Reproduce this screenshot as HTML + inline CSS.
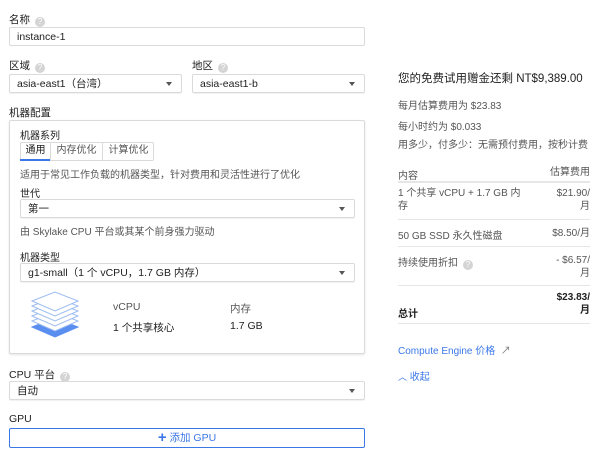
<!DOCTYPE html>
<html><head><meta charset="utf-8"><style>
*{margin:0;padding:0;box-sizing:border-box}
body{width:600px;height:461px;background:#fff;font-family:"Liberation Sans","Noto Sans CJK SC",sans-serif;font-size:10px;color:#212121;position:relative;overflow:hidden}
.a{position:absolute;white-space:nowrap}
.box{position:absolute;border:1px solid #dadada;border-radius:2px;background:#fff}
.sel,.inp{position:absolute;border:1px solid #dadada;border-radius:2px;padding:3px 7px;line-height:12px;box-shadow:0 1px 1px rgba(0,0,0,.06);font-size:10.5px}
.sel:after{content:"";position:absolute;right:9px;top:7px;border:3px solid transparent;border-top:4px solid #555}
.q{display:inline-block;width:10px;height:10px;border-radius:50%;background:#d4d4d4;color:#fff;font-size:8px;line-height:10px;text-align:center;vertical-align:-1px;margin-left:5px}
.g{color:#555}
.hr{position:absolute;left:398px;width:192px;height:1px;background:#e6e6e6}
.r{position:absolute;right:10px;text-align:right;line-height:13px}
</style></head><body>
<div class="a" style="left:9px;top:12px;font-size:10.5px">名称<span class="q">?</span></div>
<div class="inp" style="left:9px;top:27px;width:356px;height:19px;box-shadow:none">instance-1</div>
<div class="a" style="left:9px;top:58px;font-size:10.5px">区域<span class="q">?</span></div>
<div class="sel" style="left:9px;top:74px;width:173px;height:19px">asia-east1（台湾）</div>
<div class="a" style="left:192px;top:58px;font-size:10.5px">地区<span class="q">?</span></div>
<div class="sel" style="left:192px;top:74px;width:173px;height:19px">asia-east1-b</div>
<div class="a" style="left:9px;top:105px;font-size:10.5px">机器配置</div>
<div class="box" style="left:9px;top:120px;width:356px;height:234px;box-shadow:0 1px 2px rgba(0,0,0,.1)"></div>
<div class="a" style="left:20px;top:127px">机器系列</div>
<div class="box" style="left:20px;top:142px;width:134px;height:19px"></div>
<div class="a" style="left:20px;top:142px;width:31px;height:19px;text-align:center;line-height:18px;border-bottom:2px solid #3b78e7">通用</div>
<div class="a g" style="left:50px;top:142px;width:53px;height:19px;text-align:center;line-height:18px;border-left:1px solid #dadada;border-right:1px solid #dadada">内存优化</div>
<div class="a g" style="left:103px;top:142px;width:51px;text-align:center;line-height:18px">计算优化</div>
<div class="a g" style="left:20px;top:166px">适用于常见工作负载的机器类型，针对费用和灵活性进行了优化</div>
<div class="a" style="left:20px;top:185px">世代</div>
<div class="sel" style="left:20px;top:199px;width:335px;height:19px">第一</div>
<div class="a g" style="left:20px;top:223px">由 Skylake CPU 平台或其某个前身强力驱动</div>
<div class="a" style="left:20px;top:249px">机器类型</div>
<div class="sel" style="left:20px;top:263px;width:335px;height:19px">g1-small（1 个 vCPU，1.7 GB 内存）</div>
<svg class="a" style="left:30px;top:290px" width="50" height="52" viewBox="0 0 50 52">
<g fill="#fff" stroke="#9dbcf0" stroke-width="1">
<path d="M2 37 L25 28 L48 37 L25 47Z" fill="#5a8ef0" stroke="#5a8ef0"/>
<path d="M2 31 L25 22 L48 31 L25 41Z"/>
<path d="M2 26 L25 17 L48 26 L25 36Z"/>
<path d="M2 21 L25 12 L48 21 L25 31Z"/>
<path d="M2 16 L25 7 L48 16 L25 26Z"/>
<path d="M2 11 L25 2 L48 11 L25 21Z"/>
</g></svg>
<div class="a g" style="left:113px;top:301px;font-size:10.5px">vCPU</div>
<div class="a" style="left:113px;top:320px;font-size:10.5px">1 个共享核心</div>
<div class="a g" style="left:230px;top:301px;font-size:10.5px">内存</div>
<div class="a" style="left:230px;top:320px;font-size:10.5px">1.7 GB</div>
<div class="a" style="left:9px;top:367px;font-size:10.5px">CPU 平台<span class="q">?</span></div>
<div class="sel" style="left:9px;top:381px;width:356px;height:19px">自动</div>
<div class="a" style="left:9px;top:413px;font-size:10.5px">GPU</div>
<div class="a" style="left:9px;top:428px;width:356px;height:20px;border:1px solid #3b78e7;border-radius:2px;color:#3b78e7;text-align:center;line-height:18px;font-size:10.5px"><b style="font-size:15px;vertical-align:-1px">+</b> 添加 GPU</div>

<div class="a" style="left:398px;top:70px;font-size:11.5px">您的免费试用赠金还剩 NT$9,389.00</div>
<div class="a g" style="left:398px;top:97px">每月估算费用为 $23.83</div>
<div class="a g" style="left:398px;top:118px">每小时约为 $0.033</div>
<div class="a g" style="left:398px;top:136px">用多少，付多少：无需预付费用，按秒计费</div>
<div class="a g" style="left:398px;top:167px">内容</div>
<div class="r g" style="top:166px">估算费用</div>
<div class="hr" style="top:181px;height:2px"></div>
<div class="a g" style="left:398px;top:187px;line-height:13px">1 个共享 vCPU + 1.7 GB 内<br>存</div>
<div class="r g" style="top:187px">$21.90/<br>月</div>
<div class="hr" style="top:219px"></div>
<div class="a g" style="left:398px;top:227px">50 GB SSD 永久性磁盘</div>
<div class="r g" style="top:227px">$8.50/月</div>
<div class="hr" style="top:246px"></div>
<div class="a g" style="left:398px;top:254px">持续使用折扣<span class="q">?</span></div>
<div class="r g" style="top:254px">- $6.57/<br>月</div>
<div class="hr" style="top:285px"></div>
<div class="a" style="left:398px;top:305px;font-weight:bold">总计</div>
<div class="r" style="top:291px;font-weight:bold">$23.83/<br>月</div>
<div class="hr" style="top:323px"></div>
<div class="a" style="left:398px;top:342px;color:#3b78e7">Compute Engine 价格 <span style="color:#777">&nbsp;↗</span></div>
<div class="a" style="left:398px;top:368px;color:#3b78e7"><span style="font-size:9px">︿</span> 收起</div>
</body></html>
